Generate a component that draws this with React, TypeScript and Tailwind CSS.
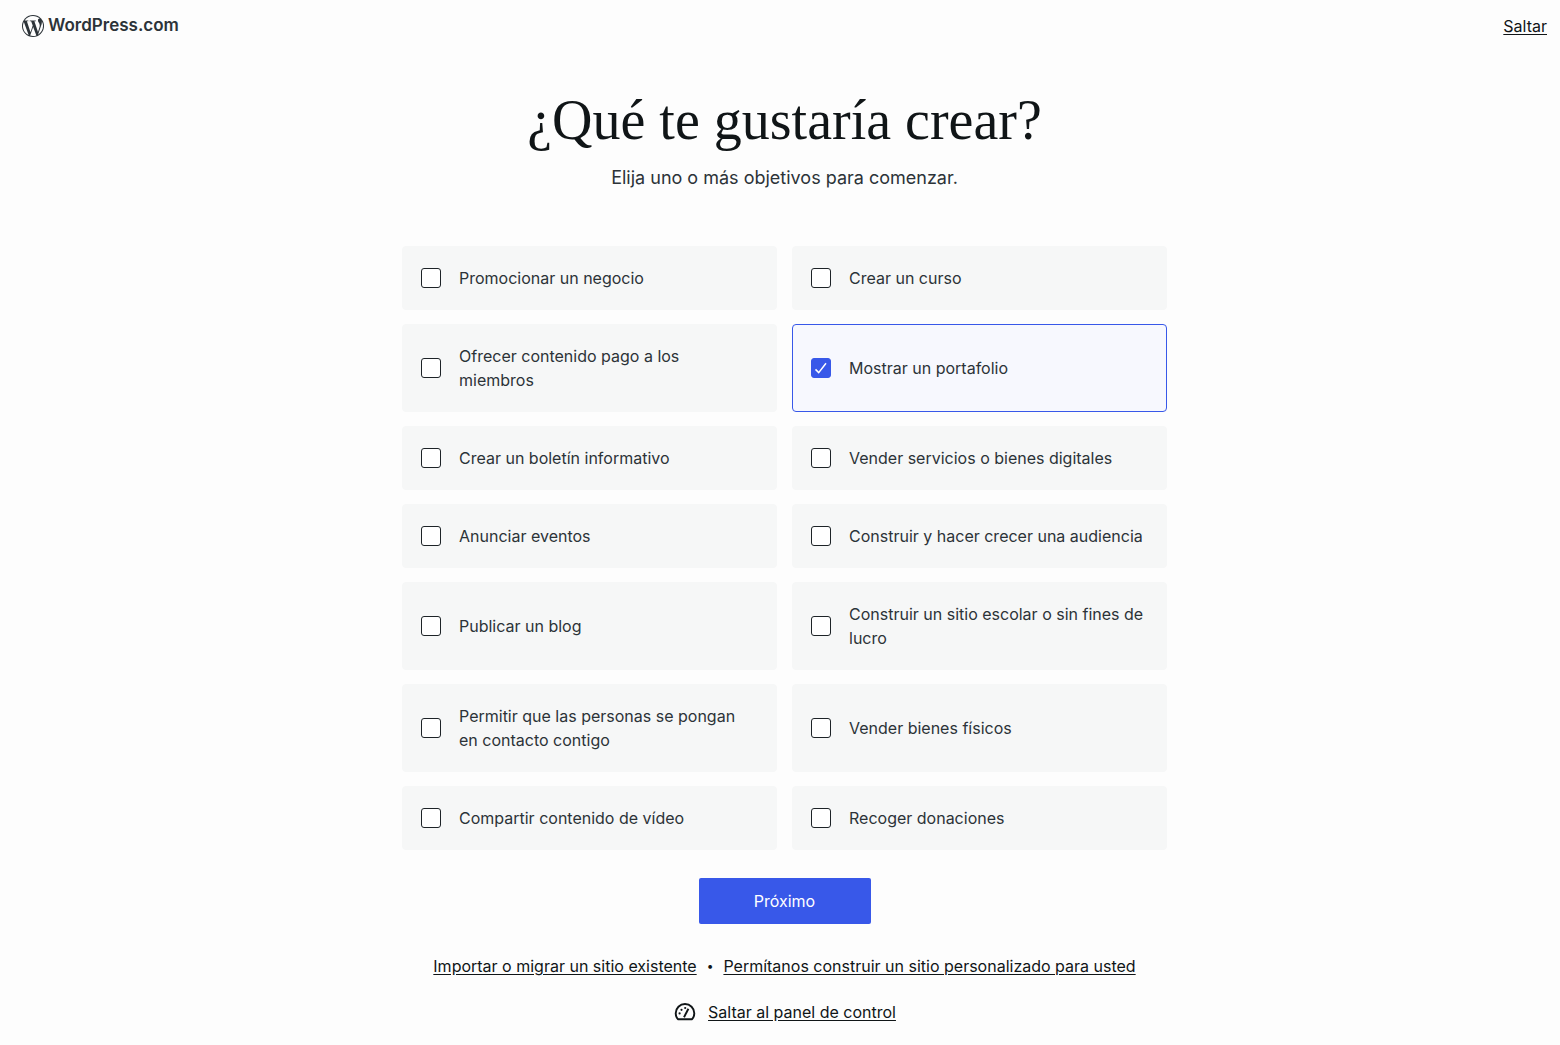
import { useState } from "react";

const goals = [
  "Promocionar un negocio",
  "Crear un curso",
  "Ofrecer contenido pago a los miembros",
  "Mostrar un portafolio",
  "Crear un boletín informativo",
  "Vender servicios o bienes digitales",
  "Anunciar eventos",
  "Construir y hacer crecer una audiencia",
  "Publicar un blog",
  "Construir un sitio escolar o sin fines de lucro",
  "Permitir que las personas se pongan en contacto contigo",
  "Vender bienes físicos",
  "Compartir contenido de vídeo",
  "Recoger donaciones",
];

function WordPressMark() {
  return (
    <svg viewBox="2 2 20 20" className="size-[22px]" aria-hidden="true">
      <circle cx="12" cy="12" r="10" fill="#2c3338" />
      <g fill="#fdfdfd" transform="translate(12 12) scale(1.07) translate(-12 -12)">
        <path d="M3.5 12c0-1.232.264-2.402.736-3.459L8.291 19.65C5.456 18.272 3.5 15.365 3.5 12zm8.5 8.501c-.834 0-1.64-.122-2.402-.346l2.551-7.411 2.613 7.158.061.117c-.883.31-1.833.482-2.823.482zm1.172-12.486c.512-.027.973-.081.973-.081.458-.054.404-.727-.054-.701 0 0-1.377.108-2.266.108-.835 0-2.239-.108-2.239-.108-.459-.026-.512.674-.054.701 0 0 .434.054.892.081l1.324 3.629-1.86 5.579-3.096-9.208c.512-.027.973-.081.973-.081.458-.054.403-.727-.055-.701 0 0-1.376.108-2.265.108-.16 0-.347-.004-.547-.01A8.491 8.491 0 0 1 12 3.5c2.213 0 4.228.846 5.74 2.232-.037-.002-.072-.007-.11-.007-.835 0-1.427.727-1.427 1.509 0 .701.404 1.293.835 1.994.323.566.701 1.293.701 2.344 0 .727-.28 1.572-.647 2.748l-.848 2.833-3.072-9.138zm3.101 11.332l2.596-7.506c.485-1.213.646-2.182.646-3.045 0-.313-.021-.603-.057-.874A8.455 8.455 0 0 1 20.5 12c0 3.136-1.7 5.874-4.227 7.347z" />
      </g>
    </svg>
  );
}

function GaugeIcon() {
  return (
    <svg viewBox="0 0 24 24" className="size-6" fill="none" stroke="#101517" aria-hidden="true">
      <path d="M4.9 19.2h14.2c1.4-1.6 2.2-3.700 2.200-5.900a9.300 9.300 0 0 0-18.600 0c0 2.200.8 4.300 2.200 5.900Z" strokeWidth="1.9" strokeLinejoin="round" />
      <path d="m11 17.300 4.400-8.600" strokeWidth="1.900" />
      <g fill="#101517" stroke="none">
        <circle cx="6.600" cy="13.400" r="1.100" />
        <circle cx="8.500" cy="9.800" r="1.100" />
        <circle cx="12.200" cy="8" r="1.100" />
      </g>
    </svg>
  );
}

function GoalCard({ label, checked, onToggle }: { label: string; checked: boolean; onToggle: () => void }) {
  return (
    <label
      className={`flex cursor-pointer items-center gap-[18px] rounded border py-[19px] pr-5 pl-[18px] ${
        checked ? "border-[#3858e9] bg-[#f7f8fe]" : "border-[#f6f7f7] bg-[#f6f7f7]"
      }`}
    >
      <span className="relative flex size-5 shrink-0">
        <input
          type="checkbox"
          checked={checked}
          onChange={onToggle}
          className="size-5 appearance-none rounded-[3px] border border-[#1d2327] bg-white checked:border-[#3858e9] checked:bg-[#3858e9]"
        />
        {checked && (
          <svg viewBox="0 0 20 20" className="pointer-events-none absolute inset-0 size-5" fill="none" stroke="white" strokeWidth="1.5" aria-hidden="true">
            <path d="m4.500 11.400 3.200 3.200 7.300-9.400" />
          </svg>
        )}
      </span>
      <span className="text-base leading-6 text-[#2c3338]">{label}</span>
    </label>
  );
}

export default function App() {
  const [selected, setSelected] = useState<string[]>(["Mostrar un portafolio"]);
  const toggle = (goal: string) =>
    setSelected((s) => (s.includes(goal) ? s.filter((g) => g !== goal) : [...s, goal]));

  return (
    <div className="min-h-screen bg-[#fdfdfd] font-['Inter',sans-serif] text-[#101517]">
      <header className="flex h-[52px] items-center justify-between pr-[13px] pl-[22px]">
        <a href="#inicio" className="flex items-center gap-1 text-[#2c3338]">
          <WordPressMark />
          <span className="text-[17px] font-semibold">WordPress.com</span>
        </a>
        <a href="#saltar" className="text-base underline underline-offset-2">Saltar</a>
      </header>

      <main className="flex flex-col items-center pl-[9px]">
        <h1 className="mt-9 text-center font-['Liberation_Serif',serif] text-[56px] leading-16">
          ¿Qué te gustaría crear?
        </h1>
        <p className="mt-3 text-center text-lg leading-7 text-[#2c3338]">Elija uno o más objetivos para comenzar.</p>

        <form className="mt-[54px] flex w-full max-w-[765px] flex-col items-center" onSubmit={(e) => e.preventDefault()}>
          <div className="grid w-full grid-cols-2 gap-x-[15px] gap-y-3.5">
            {goals.map((goal) => (
              <GoalCard key={goal} label={goal} checked={selected.includes(goal)} onToggle={() => toggle(goal)} />
            ))}
          </div>
          <button type="submit" className="mt-7 h-[46px] w-[172px] rounded-[2px] bg-[#3858e9] text-base text-white">
            Próximo
          </button>
        </form>

        <nav className="mt-[30px] flex flex-wrap items-center justify-center gap-2.5 text-base leading-6">
          <a href="#importar" className="underline underline-offset-2">Importar o migrar un sitio existente</a>
          <span className="text-xs">•</span>
          <a href="#personalizado" className="underline underline-offset-2">Permítanos construir un sitio personalizado para usted</a>
        </nav>
        <a href="#panel" className="mt-[22px] flex items-center gap-[11px] text-base leading-6">
          <GaugeIcon />
          <span className="underline underline-offset-2">Saltar al panel de control</span>
        </a>
      </main>
    </div>
  );
}
